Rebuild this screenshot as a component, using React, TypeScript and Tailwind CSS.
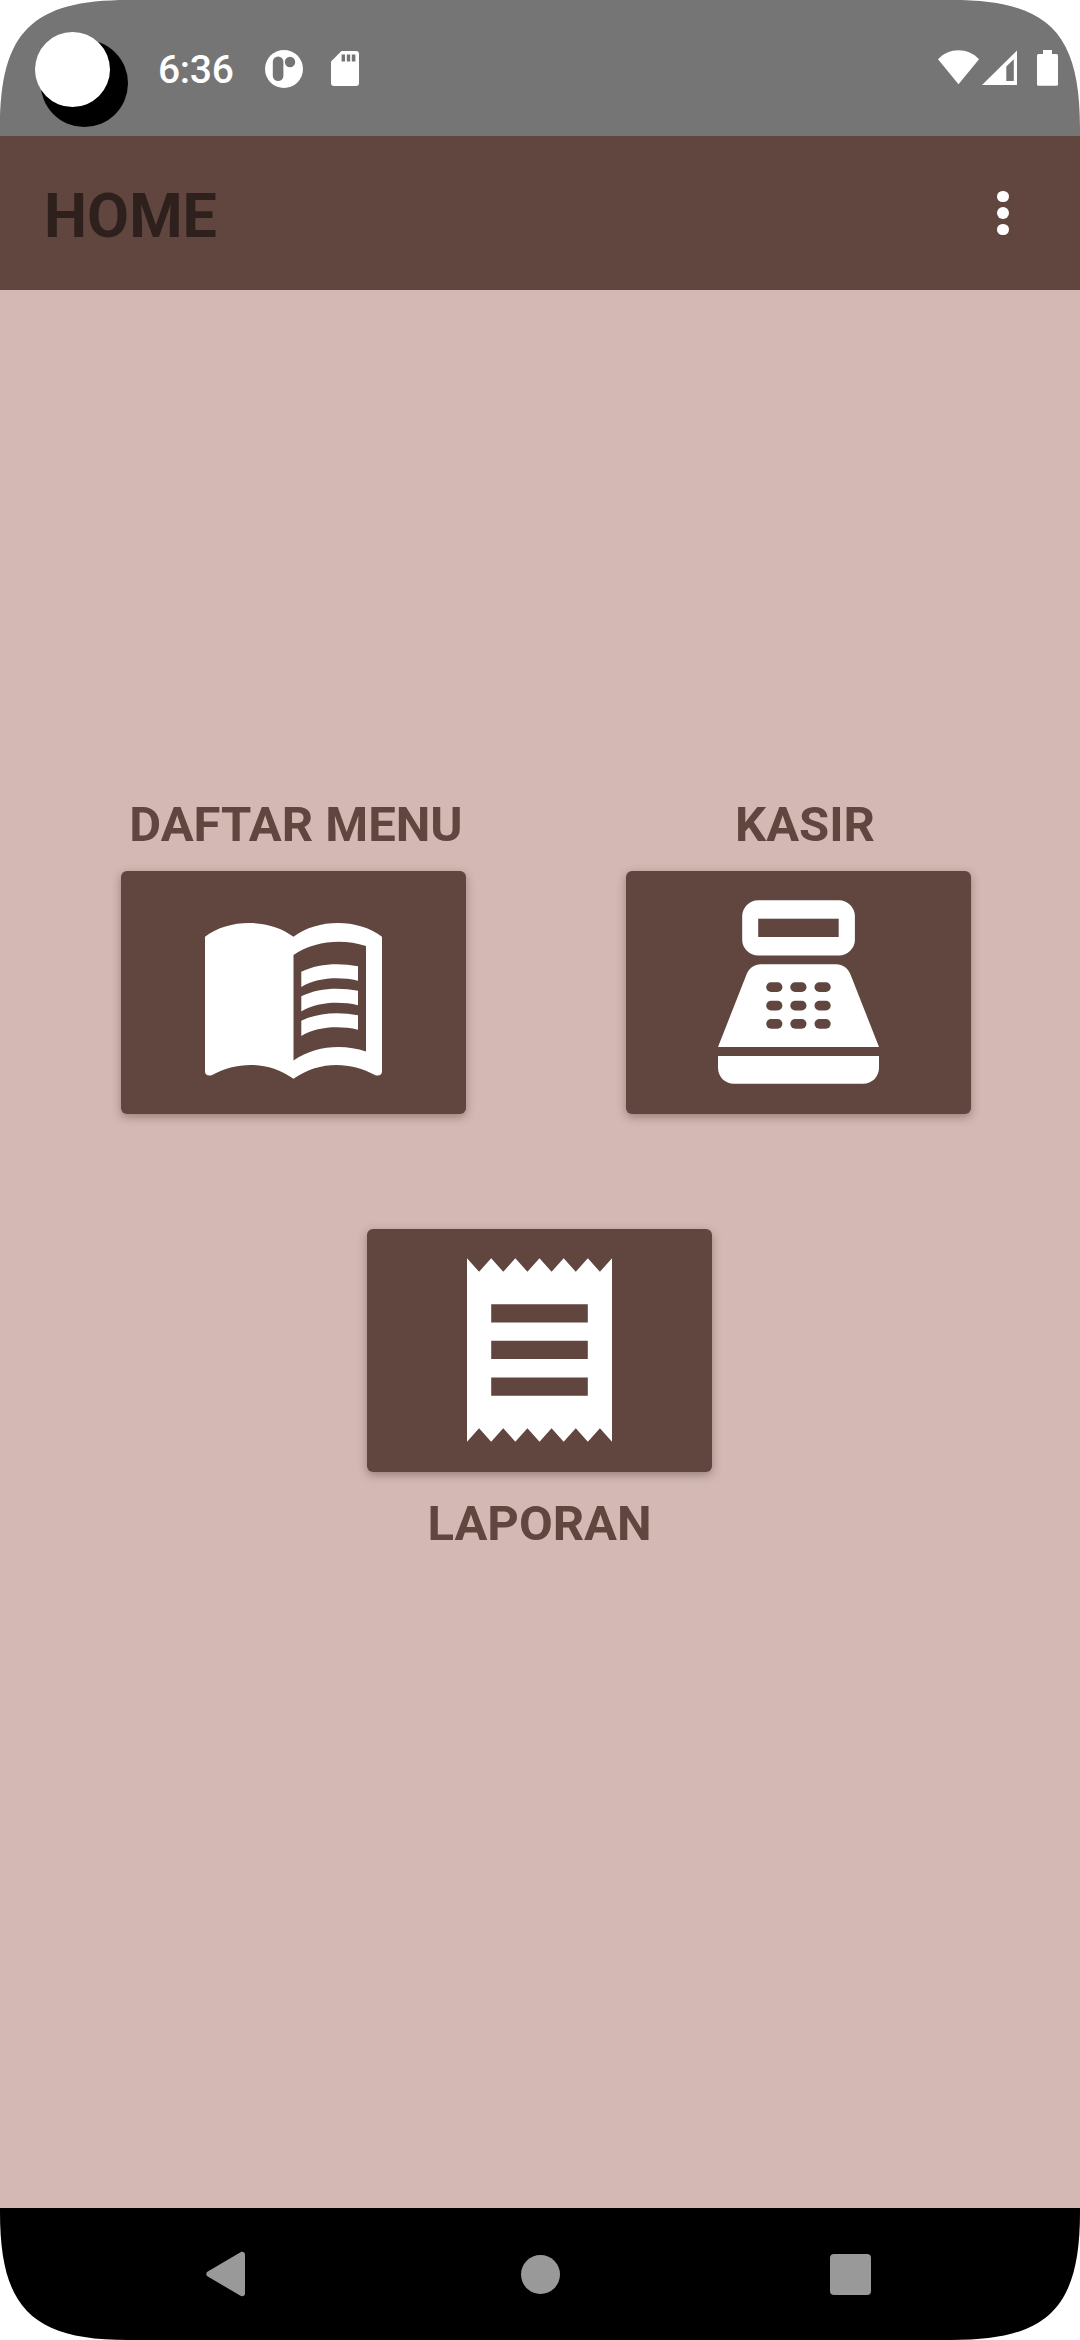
import React from 'react';

const CORNER = 'M0 0H128C32 0 0 32 0 128Z';

function Corner({ className }: { className: string }) {
  return (
    <svg className={`absolute size-32 text-white ${className}`} viewBox="0 0 128 128" fill="currentColor">
      <path d={CORNER} />
    </svg>
  );
}

function StatusBar() {
  return (
    <header className="relative flex h-[136px] shrink-0 items-center bg-[#757575] text-white">
      <svg className="mt-[24px] ml-[35px] h-[96px] w-[94px]" viewBox="0 0 94 96">
        <circle cx="49.3" cy="51.3" r="43.7" fill="#000" />
        <circle cx="37.5" cy="37.500" r="37.5" fill="#fff" />
      </svg>
      <span className="mt-[4px] ml-[29px] w-[77px] text-[39px] leading-none font-medium tracking-[-0.3px]">6:36</span>
      <svg className="mt-px ml-[29.5px] h-[38px] w-[38px]" viewBox="0 0 38 38">
        <circle cx="19" cy="19" r="19" fill="#fff" />
        <rect x="7.8" y="6.5" width="10.6" height="24.5" rx="5.3" fill="#757575" />
        <circle cx="25" cy="12" r="5.2" fill="#757575" />
      </svg>
      <svg className="mt-px ml-[28px] h-[35px] w-[28px]" viewBox="0 0 28 35">
        <path d="M10.5 0H25a3 3 0 0 1 3 3V32a3 3 0 0 1-3 3H3a3 3 0 0 1-3-3V10.5Z" fill="#fff" />
        <path d="M10.6 3.6h3.4v7h-3.4zM15.8 3.6h3.4v7h-3.4zM20.8 3.6h3.6v7h-3.6z" fill="#757575" />
      </svg>
      <svg className="mr-[22px] ml-auto h-[36px] w-[120px]" viewBox="0 0 120 36" fill="#fff">
        <path d="M0 9.3C11-2.800 30-2.800 41 9.300L20.5 34.300Z" />
        <path fillRule="evenodd" d="M79 .5V35H44ZM75.8 9.2 68.3 16.5V31h7.5Z" />
        <path d="M105 0h9v4h4.500a1.500 1.500 0 0 1 1.500 1.500V34.300a1.500 1.500 0 0 1-1.500 1.500h-18a1.500 1.500 0 0 1-1.500-1.500V5.500a1.500 1.500 0 0 1 1.500-1.500H105Z" />
      </svg>
    </header>
  );
}

function AppBar() {
  return (
    <div className="flex h-[154px] shrink-0 items-center justify-between bg-[#60463f] pr-[71.3px] pl-[44px]">
      <h1 className="mt-[6px] text-[61px] leading-none font-bold text-[#2e201d]">HOME</h1>
      <button aria-label="More options" className="flex flex-col gap-[5px]">
        <span className="size-[11.5px] rounded-full bg-white" />
        <span className="size-[11.5px] rounded-full bg-white" />
        <span className="size-[11.5px] rounded-full bg-white" />
      </button>
    </div>
  );
}

function BookIcon() {
  return (
    <svg className="mt-[17px] h-[156px] w-[177px]" viewBox="0 0 177 156" fill="#fff">
      <path
        fillRule="evenodd"
        d="M0 13.700C24-4.500 64-4.600 88.500 13.700C113-4.600 153-4.500 177 13.700V148.500C177 151.500 174 153.500 170.500 152.200C144 138 114 138 88.500 155.700C63 138 33 138 6.500 152.200C3 153.500 0 151.500 0 148.500ZM88.500 32V137.500C110 122.500 138 120.500 161 128.500V23C138 15.500 110 17.500 88.500 32Z"
      />
      <path d="M96.300 48.700C113 40.500 134 39.500 153 43.300V57.700C134 53.500 112 54.500 96.300 64Z" />
      <path d="M96.300 73.200C113 65 134 64 153 67.800V82.200C134 78 112 79 96.300 88.500Z" />
      <path d="M96.300 97.700C113 89.500 134 88.500 153 92.300V106.700C134 102.500 112 103.500 96.300 113Z" />
    </svg>
  );
}

function RegisterIcon() {
  return (
    <svg className="-mt-px h-[184px] w-[161px]" viewBox="0 0 161 184">
      <rect x="24.200" y=".3" width="112.700" height="55.200" rx="16" fill="#fff" />
      <rect x="40.200" y="18.700" width="80.500" height="18.300" fill="#60463f" />
      <path
        d="M0 147 28.500 74.500C31 68.500 36 64.300 43 64.300H118C125 64.300 130 68.500 132.500 74.500L161 147ZM0 156H161V167.500C161 177 154 183.700 145 183.700H16C7 183.700 0 177 0 167.500Z"
        fill="#fff"
      />
      {[82.3, 100.8, 119].map((y) =>
        [48.2, 72.3, 96.5].map((x) => (
          <rect key={`${x}-${y}`} x={x} y={y} width="16.200" height="9.700" rx="4.850" fill="#60463f" />
        )),
      )}
    </svg>
  );
}

function ReceiptIcon() {
  return (
    <svg className="-mt-px h-[184px] w-[145px]" viewBox="0 0 145 184">
      <path
        d="M0 .3 12.080 13.700 24.170 .3 36.250 13.700 48.330 .3 60.420 13.700 72.500 .3 84.580 13.700 96.670 .3 108.750 13.700 120.830 .3 132.920 13.700 145 .3V183.700L132.920 170.200 120.830 183.700 108.750 170.200 96.670 183.700 84.580 170.200 72.500 183.700 60.420 170.200 48.330 183.700 36.250 170.200 24.170 183.700 12.080 170.200 0 183.700Z"
        fill="#fff"
      />
      <path d="M24.200 46.200h96.600v18.300H24.200zM24.200 82.800h96.600v18.300H24.200zM24.200 119.500h96.600v18.300H24.200z" fill="#60463f" />
    </svg>
  );
}

function Tile({ label, children }: { label: string; children: React.ReactNode }) {
  return (
    <button
      aria-label={label}
      className="flex h-[243px] w-[345px] items-center justify-center rounded-[6px] bg-[#60463f] shadow-[0_3px_10px_rgba(60,45,40,0.4)]"
    >
      {children}
    </button>
  );
}

export default function App() {
  return (
    <div
      className="relative flex h-[2340px] w-[1080px] flex-col overflow-hidden bg-[#d4b8b3]"
      style={{ fontFamily: 'Roboto, sans-serif' }}
    >
      <StatusBar />
      <AppBar />
      <main className="flex grow flex-col items-center text-[49px] leading-[57px] font-bold text-[#60463f]">
        <div className="mt-[506px] flex w-full justify-between pr-[109px] pl-[121px]">
          <section className="flex w-[345px] flex-col items-center">
            <h2 className="mb-[18px] ml-[5px] whitespace-nowrap">DAFTAR MENU</h2>
            <Tile label="Daftar menu">
              <BookIcon />
            </Tile>
          </section>
          <section className="flex w-[345px] flex-col items-center">
            <h2 className="mb-[18px] ml-[13px]">KASIR</h2>
            <Tile label="Kasir">
              <RegisterIcon />
            </Tile>
          </section>
        </div>
        <section className="mt-[115px] mr-px flex flex-col items-center">
          <Tile label="Laporan">
            <ReceiptIcon />
          </Tile>
          <h2 className="mt-[23px]">LAPORAN</h2>
        </section>
      </main>
      <nav className="flex h-[132px] shrink-0 items-center bg-black pr-[209px] pl-[206px] text-[#999999]">
        <svg className="h-[46px] w-[39px]" viewBox="0 0 39 46" fill="currentColor">
          <path d="M1.800 20.500 34.500 1.200C36.500 0 39 1.200 39 3.500V42.500C39 44.800 36.500 46 34.500 44.800L1.800 25.500C-.2 24.300-.2 21.700 1.800 20.500Z" />
        </svg>
        <span className="ml-[276px] size-[39px] rounded-full bg-current" />
        <span className="mt-px ml-auto size-[41px] rounded-[4px] bg-current" />
      </nav>
      <Corner className="top-0 left-0" />
      <Corner className="top-0 right-0 -scale-x-100" />
      <Corner className="bottom-0 left-0 -scale-y-100" />
      <Corner className="right-0 bottom-0 -scale-100" />
    </div>
  );
}
